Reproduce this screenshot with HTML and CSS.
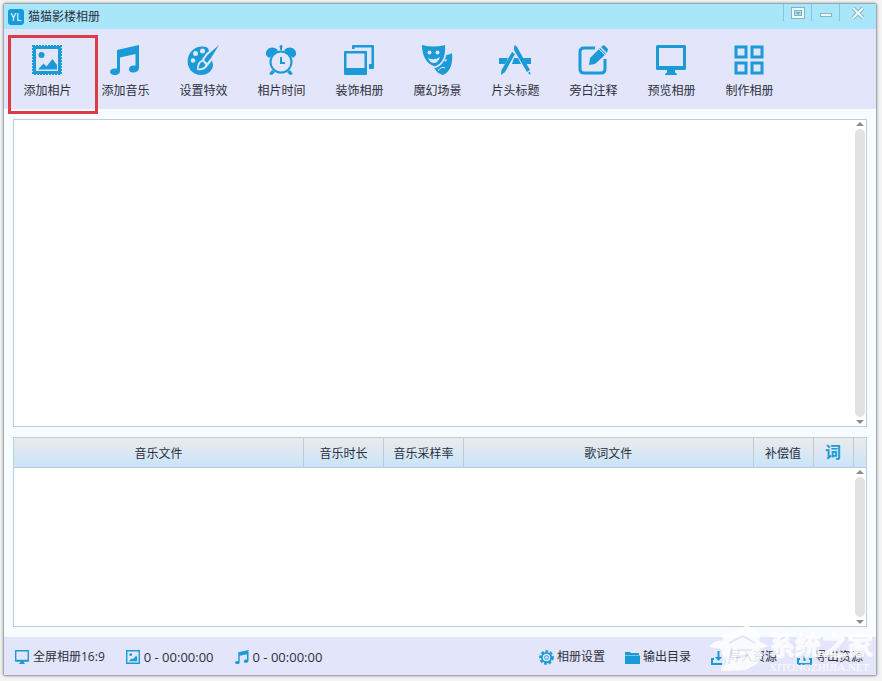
FILE: index.html
```html
<!DOCTYPE html>
<html lang="zh-CN">
<head>
    <meta charset="UTF-8">
    <meta name="viewport" content="width=device-width, initial-scale=1.0">
    <title>猫猫影楼相册</title>
    <link rel="stylesheet" href="styles.css">
</head>
<body>
    <svg class="sprite" aria-hidden="true">
        <symbol id="i-note" viewBox="0 0 30 30">
            <path d="M7 5 29 0v23c0 3-3 4.500-6 4.500s-4-1.500-4-3.500 2-3.500 4.500-3.500h2V9L10 12.500V26c0 3-3 4.500-6 4S0 28.500 0 26.800 2 23.500 4.500 23.500H7z"/>
        </symbol>
        <symbol id="i-monitor" viewBox="0 0 30 30">
            <path fill-rule="evenodd" d="M1.500 0h27Q30 0 30 1.500v22Q30 25 28.500 25H19v2.500l2 1.500v1H9v-1l2-1.500V25H1.500Q0 25 0 23.500v-22Q0 0 1.500 0zM3 3v18h24V3z"/>
        </symbol>
    </svg>

    <div class="window">
        <header class="titlebar">
            <span class="logo">YL</span>
            <h1>猫猫影楼相册</h1>
            <div class="controls">
                <button type="button" aria-label="菜单">
                    <svg viewBox="0 0 14 12"><path class="edge" d="M2 2h10v8H2z"/><path class="glyph" d="M2 2h10v8H2z"/><path class="arrow" d="M4 5h6L7 8z"/></svg>
                </button>
                <button type="button" aria-label="最小化">
                    <svg viewBox="0 0 14 12"><path class="edge" d="M1 8h12"/><path class="glyph" d="M2 8h10"/></svg>
                </button>
                <button type="button" class="close" aria-label="关闭">
                    <svg viewBox="0 0 14 12"><path class="edge" d="m2 1 10 10M12 1 2 11"/><path class="glyph" d="m2 1 10 10M12 1 2 11"/></svg>
                </button>
            </div>
        </header>

        <nav class="toolbar">
            <button type="button" class="tool active">
                <svg viewBox="0 0 30 30">
                    <path fill-rule="evenodd" d="M1 1h28v28H1zM4 4v22h22V4z"/>
                    <path class="perforation" d="M1 1h28v28H1z"/>
                    <circle cx="9.500" cy="10" r="3"/>
                    <path d="m6 24.500 5.500-6 3 3 6-7.500 4.500 6v4.500z"/>
                </svg>
                <span>添加相片</span>
            </button>
            <button type="button" class="tool">
                <svg><use href="#i-note"/></svg>
                <span>添加音乐</span>
            </button>
            <button type="button" class="tool">
                <svg viewBox="0 0 30 30">
                    <path d="M20 3C12-1 2 4 0 13c-2 9 4 17 13 17 7 0 12-5 12-10 0-2-1-3-1-5L20 3z"/>
                    <path class="cut" d="M31 0 19 9l-5 7q-4 2-4 8 7 1 9-4l5-6z"/>
                    <path d="M31 0 19.500 10 16 15l3 3 4-5zM14.500 16.500l3 3q-1 4-7 4 1-6 4-7z"/>
                    <g class="hole"><circle cx="14.500" cy="6" r="2.500"/><circle cx="7.500" cy="8.500" r="2.500"/><circle cx="5" cy="15.500" r="2.300"/></g>
                </svg>
                <span>设置特效</span>
            </button>
            <button type="button" class="tool">
                <svg viewBox="0 0 30 30">
                    <path d="M0 10C-1 5 4 1 9 3l3 2-9 8zM30 10c1-5-4-9-9-7l-3 2 9 8zM6 25l3 2-3 3-3-1zM24 25l-3 2 3 3 3-1z"/>
                    <circle cx="15" cy="17" r="10.500" class="line"/>
                    <path class="line" d="M15 5V1"/><circle cx="15" cy="1.500" r="1.500"/>
                    <path class="line" d="M15 12v6h4"/>
                </svg>
                <span>相片时间</span>
            </button>
            <button type="button" class="tool">
                <svg viewBox="0 0 30 30">
                    <path fill-rule="evenodd" d="M1 6h21q1 0 1 1v22q0 1-1 1H1q-1 0-1-1V7q0-1 1-1zm1.500 2.500V23h18V8.500z"/>
                    <path d="M8 4V1q0-1 1-1h20q1 0 1 1v22q0 1-1 1h-4v-5h2.500V2.500h-17V4z"/>
                </svg>
                <span>装饰相册</span>
            </button>
            <button type="button" class="tool">
                <svg viewBox="0 0 30 30">
                    <path d="M24 10c2 0 4-1 6-2 1 9-1 19-9 22-4-1-7-3-9-8z"/>
                    <path class="cut" d="M0 0q12 3 24 0c1 12-4 20-11 22C4 20 0 10 0 0z"/>
                    <path d="M0 0q12 3 23 0c1 12-3 19-10 21.500C4 19 0 10 0 0z"/>
                    <g class="hole"><circle cx="7.500" cy="7.500" r="2"/><circle cx="15.500" cy="7.500" r="2"/><path d="M6 13q6 3 12-1-2 6-6 6-4 0-6-5zM22 15l3-1-1 3z"/></g>
                    <path class="smile" d="M16 26q3-5 7-3"/>
                </svg>
                <span>魔幻场景</span>
            </button>
            <button type="button" class="tool">
                <svg viewBox="0 0 30 30">
                    <path d="M-1 13h9l-3 6h-6zM14 13h4l3 6h-9zM23 13h8v6h-5z"/>
                    <path d="m12 7 3 2L5 27l-4 3 .500-5z"/>
                    <path d="m14 2 1-2 2 2 13 23-3 2L14 5z"/>
                    <path d="m28 28 2-1.500.500 3.500z"/>
                </svg>
                <span>片头标题</span>
            </button>
            <button type="button" class="tool">
                <svg viewBox="0 0 30 30">
                    <path class="line thick" d="M17 3H6Q2 3 2 7v17q0 4 4 4h17q4 0 4-4V14"/>
                    <path d="m22 3 6 6-11 10-6 1 1-7zM23 2l3-2 4 4-1 4z"/>
                    <path class="scratch" d="m21 4 6 6"/>
                </svg>
                <span>旁白注释</span>
            </button>
            <button type="button" class="tool">
                <svg><use href="#i-monitor"/></svg>
                <span>预览相册</span>
            </button>
            <button type="button" class="tool">
                <svg viewBox="0 0 30 30"><path class="line thick" d="M2 2h10v10H2zM18 2h10v10H18zM2 18h10v10H2zM18 18h10v10H18z"/></svg>
                <span>制作相册</span>
            </button>
        </nav>

        <main class="content">
            <section class="photos" aria-label="相片">
                <div class="scrollbar"><i></i></div>
            </section>
            <section class="music" aria-label="音乐">
                <table>
                    <colgroup>
                        <col><col class="col-md"><col class="col-md"><col><col class="col-sm"><col class="col-xs"><col class="col-end">
                    </colgroup>
                    <thead>
                        <tr>
                            <th>音乐文件</th>
                            <th>音乐时长</th>
                            <th>音乐采样率</th>
                            <th>歌词文件</th>
                            <th>补偿值</th>
                            <th class="lyric">词</th>
                            <th></th>
                        </tr>
                    </thead>
                </table>
                <div class="list">
                    <div class="scrollbar"><i></i></div>
                </div>
            </section>
        </main>

        <footer class="statusbar">
            <div class="stats">
                <span class="stat"><svg><use href="#i-monitor"/></svg>全屏相册16:9</span>
                <span class="stat">
                    <svg viewBox="0 0 15 15"><path fill-rule="evenodd" d="M0 0h15v15H0zm1.500 1.500v12h12v-12z"/><circle cx="5" cy="5" r="1.500"/><path d="m3 12 3-3 1.500 1L11 6l1 2v4z"/></svg>
                    0 - 00:00:00
                </span>
                <span class="stat"><svg><use href="#i-note"/></svg>0 - 00:00:00</span>
            </div>
            <div class="actions">
                <button type="button">
                    <svg viewBox="0 0 16 16"><circle cx="8" cy="8" r="5" class="line"/><circle cx="8" cy="8" r="2" class="line thin"/><circle cx="8" cy="8" r="6.800" class="teeth"/></svg>
                    相册设置
                </button>
                <button type="button">
                    <svg viewBox="0 0 15 15"><path d="M0 2h5l1 1h8v2H0zM0 5.500h15V14H0z"/></svg>
                    输出目录
                </button>
                <button type="button">
                    <svg viewBox="0 0 15 15"><path class="line" d="M3 9H1v5h13V9h-2"/><path d="M6.500 1h2v6H11l-3.500 4L4 7h2.500z"/></svg>
                    导入资源
                </button>
                <button type="button">
                    <svg viewBox="0 0 15 15"><path class="line" d="M3 9H1v5h13V9h-2"/><path d="M6.500 11h2V5H11L7.500 1 4 5h2.500z"/></svg>
                    导出资源
                </button>
            </div>
        </footer>

        <div class="watermark">
            <svg viewBox="0 0 60 48"><path d="M0 22 5 17l9-2-2-5 14-3 12-7 14 9-2 7 10 5-9 3 3 6-6 9-11 6-19 1H12l2-13-2-9z"/><path class="mark" d="m20 18 14-7 12 7M23 23l-3 16M29 25h14M27 33l12-3"/></svg>
            <div class="brand">
                <strong>系统之家</strong>
                <small>XITONGZHIJIA.NET</small>
            </div>
        </div>
    </div>
</body>
</html>
```
FILE: styles.css
```css
* {
    box-sizing: border-box;
    margin: 0;
    padding: 0;
}
body {
    display: flex;
    min-height: 100vh;
    padding: 3px 5px 5px 3px;
    background: #f4f4f4;
    color: #2b3040;
    font: 12px/16px "Noto Sans", "Noto Sans CJK SC", sans-serif;
}
button {
    border: none;
    background: none;
    color: inherit;
    font: inherit;
    cursor: pointer;
}
svg {
    fill: #1a9ad7;
    overflow: visible;
}
.sprite {
    position: absolute;
    width: 0;
    height: 0;
}
.line {
    fill: none;
    stroke: #1a9ad7;
    stroke-width: 2;
}
.thick {
    stroke-width: 3;
}
.thin {
    stroke-width: 1;
}
.window {
    position: relative;
    flex: 1;
    display: flex;
    flex-direction: column;
    border: 1px solid #a5a7b5;
    border-top-color: #8dabb5;
    border-radius: 3px;
    background: #f6fcff;
    box-shadow: 0 0 3px #999;
}

/* title bar */
.titlebar {
    display: flex;
    align-items: center;
    height: 25px;
    padding-left: 4px;
    background: #aae6fa;
}
.logo {
    width: 16px;
    border-radius: 3px;
    background: #159bdb;
    color: #fff;
    font-size: 10px;
    text-align: center;
}
h1 {
    margin-left: 4px;
    font-size: 12px;
    font-weight: normal;
}
.controls {
    display: flex;
    align-self: flex-start;
    margin-left: auto;
}
.controls button {
    width: 28px;
    height: 17px;
    border-left: 1px solid #8fc3d3;
}
.controls .close {
    width: 37px;
}
.controls svg {
    display: block;
    width: 14px;
    height: 12px;
    margin: auto;
}
.edge,
.glyph {
    fill: none;
    stroke: #85b3c0;
    stroke-width: 4;
}
.glyph {
    stroke: #effaff;
    stroke-width: 2;
}
.arrow {
    fill: #7caab8;
}

/* toolbar */
.toolbar {
    display: flex;
    height: 80px;
    padding: 6px 4px 0;
    background: #e3e5fa;
}
.tool {
    position: relative;
    display: flex;
    flex-direction: column;
    align-items: center;
    justify-content: flex-start;
    gap: 8px;
    width: 78px;
    height: 68px;
    padding-top: 10px;
}
.tool svg {
    width: 30px;
    height: 30px;
}
.tool span {
    padding-left: 1px;
}
.tool.active::after {
    content: "";
    position: absolute;
    inset: 0 -12px -11px 0;
    border: 3px solid #dc3b47;
}
.perforation {
    fill: none;
    stroke: #1a9ad7;
    stroke-width: 2;
    stroke-dasharray: 2 1;
}
.cut {
    stroke: #e3e5fa;
    stroke-width: 2;
}
.cut,
.hole {
    fill: #e3e5fa;
}
.smile,
.scratch {
    fill: none;
    stroke: #e3e5fa;
    stroke-width: 1;
}

/* panels */
.content {
    flex: 1;
    display: flex;
    flex-direction: column;
    gap: 10px;
    padding: 10px 9px;
}
.photos,
.music {
    border: 1px solid #bfcddb;
    background: #fff;
}
.photos {
    flex: 308;
    display: flex;
}
.music {
    flex: 190;
    display: flex;
    flex-direction: column;
}
.list {
    flex: 1;
    display: flex;
}
.scrollbar {
    display: flex;
    flex-direction: column;
    align-items: center;
    gap: 3px;
    width: 12px;
    margin-left: auto;
    padding: 2px 0;
}
.scrollbar i {
    flex: 1;
    width: 10px;
    border-radius: 5px;
    background: #e2e2e2;
}
.scrollbar::before,
.scrollbar::after {
    content: "";
    border: 4px solid transparent;
}
.scrollbar::before {
    border-top: none;
    border-bottom: 4px solid #8c8c8c;
}
.scrollbar::after {
    border-bottom: none;
    border-top: 4px solid #8c8c8c;
}
table {
    width: 100%;
    table-layout: fixed;
    border-collapse: collapse;
}
.col-md {
    width: 80px;
}
.col-sm {
    width: 60px;
}
.col-xs {
    width: 40px;
}
.col-end {
    width: 13px;
}
thead tr {
    height: 30px;
    background: linear-gradient(#ebebeb, #c8e4fb);
}
th {
    padding-top: 3px;
    border-right: 1px solid #c0cad5;
    border-bottom: 1px solid #c0cad5;
    font-weight: normal;
}
th:last-child {
    border-right: none;
}
th.lyric {
    padding: 0;
    color: #1a9ad7;
    font-size: 16px;
    font-weight: bold;
}

/* status bar */
.statusbar {
    display: flex;
    justify-content: space-between;
    align-items: center;
    height: 38px;
    padding: 2px 13px 0 11px;
    background: #e3e5fa;
}
.stats,
.actions {
    display: flex;
    gap: 20px;
}
.stats {
    gap: 21px;
    font-family: "Open Sans", "Noto Sans CJK SC", sans-serif;
}
.stat,
.actions button {
    display: flex;
    align-items: center;
    gap: 3px;
}
.stat {
    gap: 4px;
}
.stat + .stat {
    font-size: 13px;
}
.statusbar svg {
    width: 15px;
    height: 15px;
}
.stats svg {
    width: 14px;
    height: 14px;
}
.teeth {
    fill: none;
    stroke: #1a9ad7;
    stroke-width: 2;
    stroke-dasharray: 3 2;
}

/* watermark */
.watermark {
    position: absolute;
    right: 3px;
    bottom: 2px;
    display: flex;
    align-items: flex-end;
    color: #fff;
    opacity: 0.85;
    pointer-events: none;
}
.watermark svg {
    width: 60px;
    height: 48px;
    fill: #fff;
}
.mark {
    fill: none;
    stroke: #e3e5fa;
    stroke-width: 2;
}
.brand strong {
    display: block;
    font-size: 26px;
    line-height: 32px;
    -webkit-text-stroke: 1px #fff;
}
.brand small {
    display: block;
    font: 11px/12px "Liberation Serif", serif;
}
```
